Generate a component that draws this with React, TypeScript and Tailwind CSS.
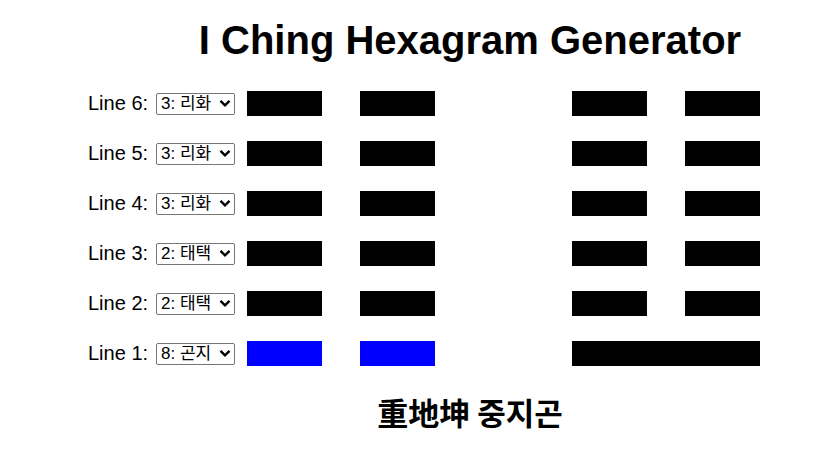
import React, { useState } from 'react';

const trigrams = ['1: 건천', '2: 태택', '3: 리화', '4: 진뢰', '5: 손풍', '6: 감수', '7: 간산', '8: 곤지'];

type Row = { line: number; pick: number; leftColor: string; rightSolid: boolean };

const initialRows: Row[] = [
  { line: 6, pick: 3, leftColor: 'bg-black', rightSolid: false },
  { line: 5, pick: 3, leftColor: 'bg-black', rightSolid: false },
  { line: 4, pick: 3, leftColor: 'bg-black', rightSolid: false },
  { line: 3, pick: 2, leftColor: 'bg-black', rightSolid: false },
  { line: 2, pick: 2, leftColor: 'bg-black', rightSolid: false },
  { line: 1, pick: 8, leftColor: 'bg-[#0000ff]', rightSolid: true },
];

function BrokenLine({ color }: { color: string }) {
  return (
    <div className="flex w-[188px] gap-[38px]">
      <div className={`h-[25px] w-[75px] ${color}`} />
      <div className={`h-[25px] w-[75px] ${color}`} />
    </div>
  );
}

function App() {
  const [rows, setRows] = useState(initialRows);

  const changePick = (line: number, pick: number) => {
    setRows(prev => prev.map(r => (r.line === line ? { ...r, pick } : r)));
  };

  return (
    <div className="h-[459px] w-[837px] overflow-hidden bg-white text-black" style={{ fontFamily: '"Liberation Sans", Arial, "Noto Sans CJK KR", sans-serif' }}>
      <h1 className="pl-[103px] pt-[17px] text-center text-[40px] font-bold leading-[46px]">I Ching Hexagram Generator</h1>

      <div className="mt-[15px] pl-[88px]">
        {rows.map(r => (
          <div key={r.line} className="flex h-[50px] items-center">
            <span className="w-[60px] shrink-0 whitespace-nowrap text-[20px] leading-none">Line {r.line}:</span>
            <div className="relative ml-[8px] h-[22px] w-[79px] shrink-0">
              <select
                value={r.pick}
                onChange={e => changePick(r.line, Number(e.target.value))}
                className="h-full w-full appearance-none rounded-[2px] border border-[#767676] bg-white pl-[4px] text-[17px] leading-none text-black"
                style={{ fontFamily: '"Liberation Sans", "Noto Sans CJK KR", sans-serif' }}
              >
                {trigrams.map((t, i) => (
                  <option key={t} value={i + 1}>{t}</option>
                ))}
              </select>
              <svg className="pointer-events-none absolute right-[4px] top-[7px]" width="12" height="9" viewBox="0 0 12 9">
                <path d="M1.5 1.8 L6 6.3 L10.5 1.8" fill="none" stroke="black" strokeWidth="2.4" />
              </svg>
            </div>
            <div className="ml-[12px] shrink-0">
              <BrokenLine color={r.leftColor} />
            </div>
            <div className="ml-[137px] shrink-0">
              {r.rightSolid ? <div className="h-[25px] w-[188px] bg-black" /> : <BrokenLine color="bg-black" />}
            </div>
          </div>
        ))}
      </div>

      <div
        className="mt-[16px] pl-[103px] text-center text-[31px] font-bold leading-[36px]"
        style={{ fontFamily: '"Noto Sans CJK KR", "Noto Sans CJK SC", sans-serif' }}
      >
        重地坤 중지곤
      </div>
    </div>
  );
}

export default App;
